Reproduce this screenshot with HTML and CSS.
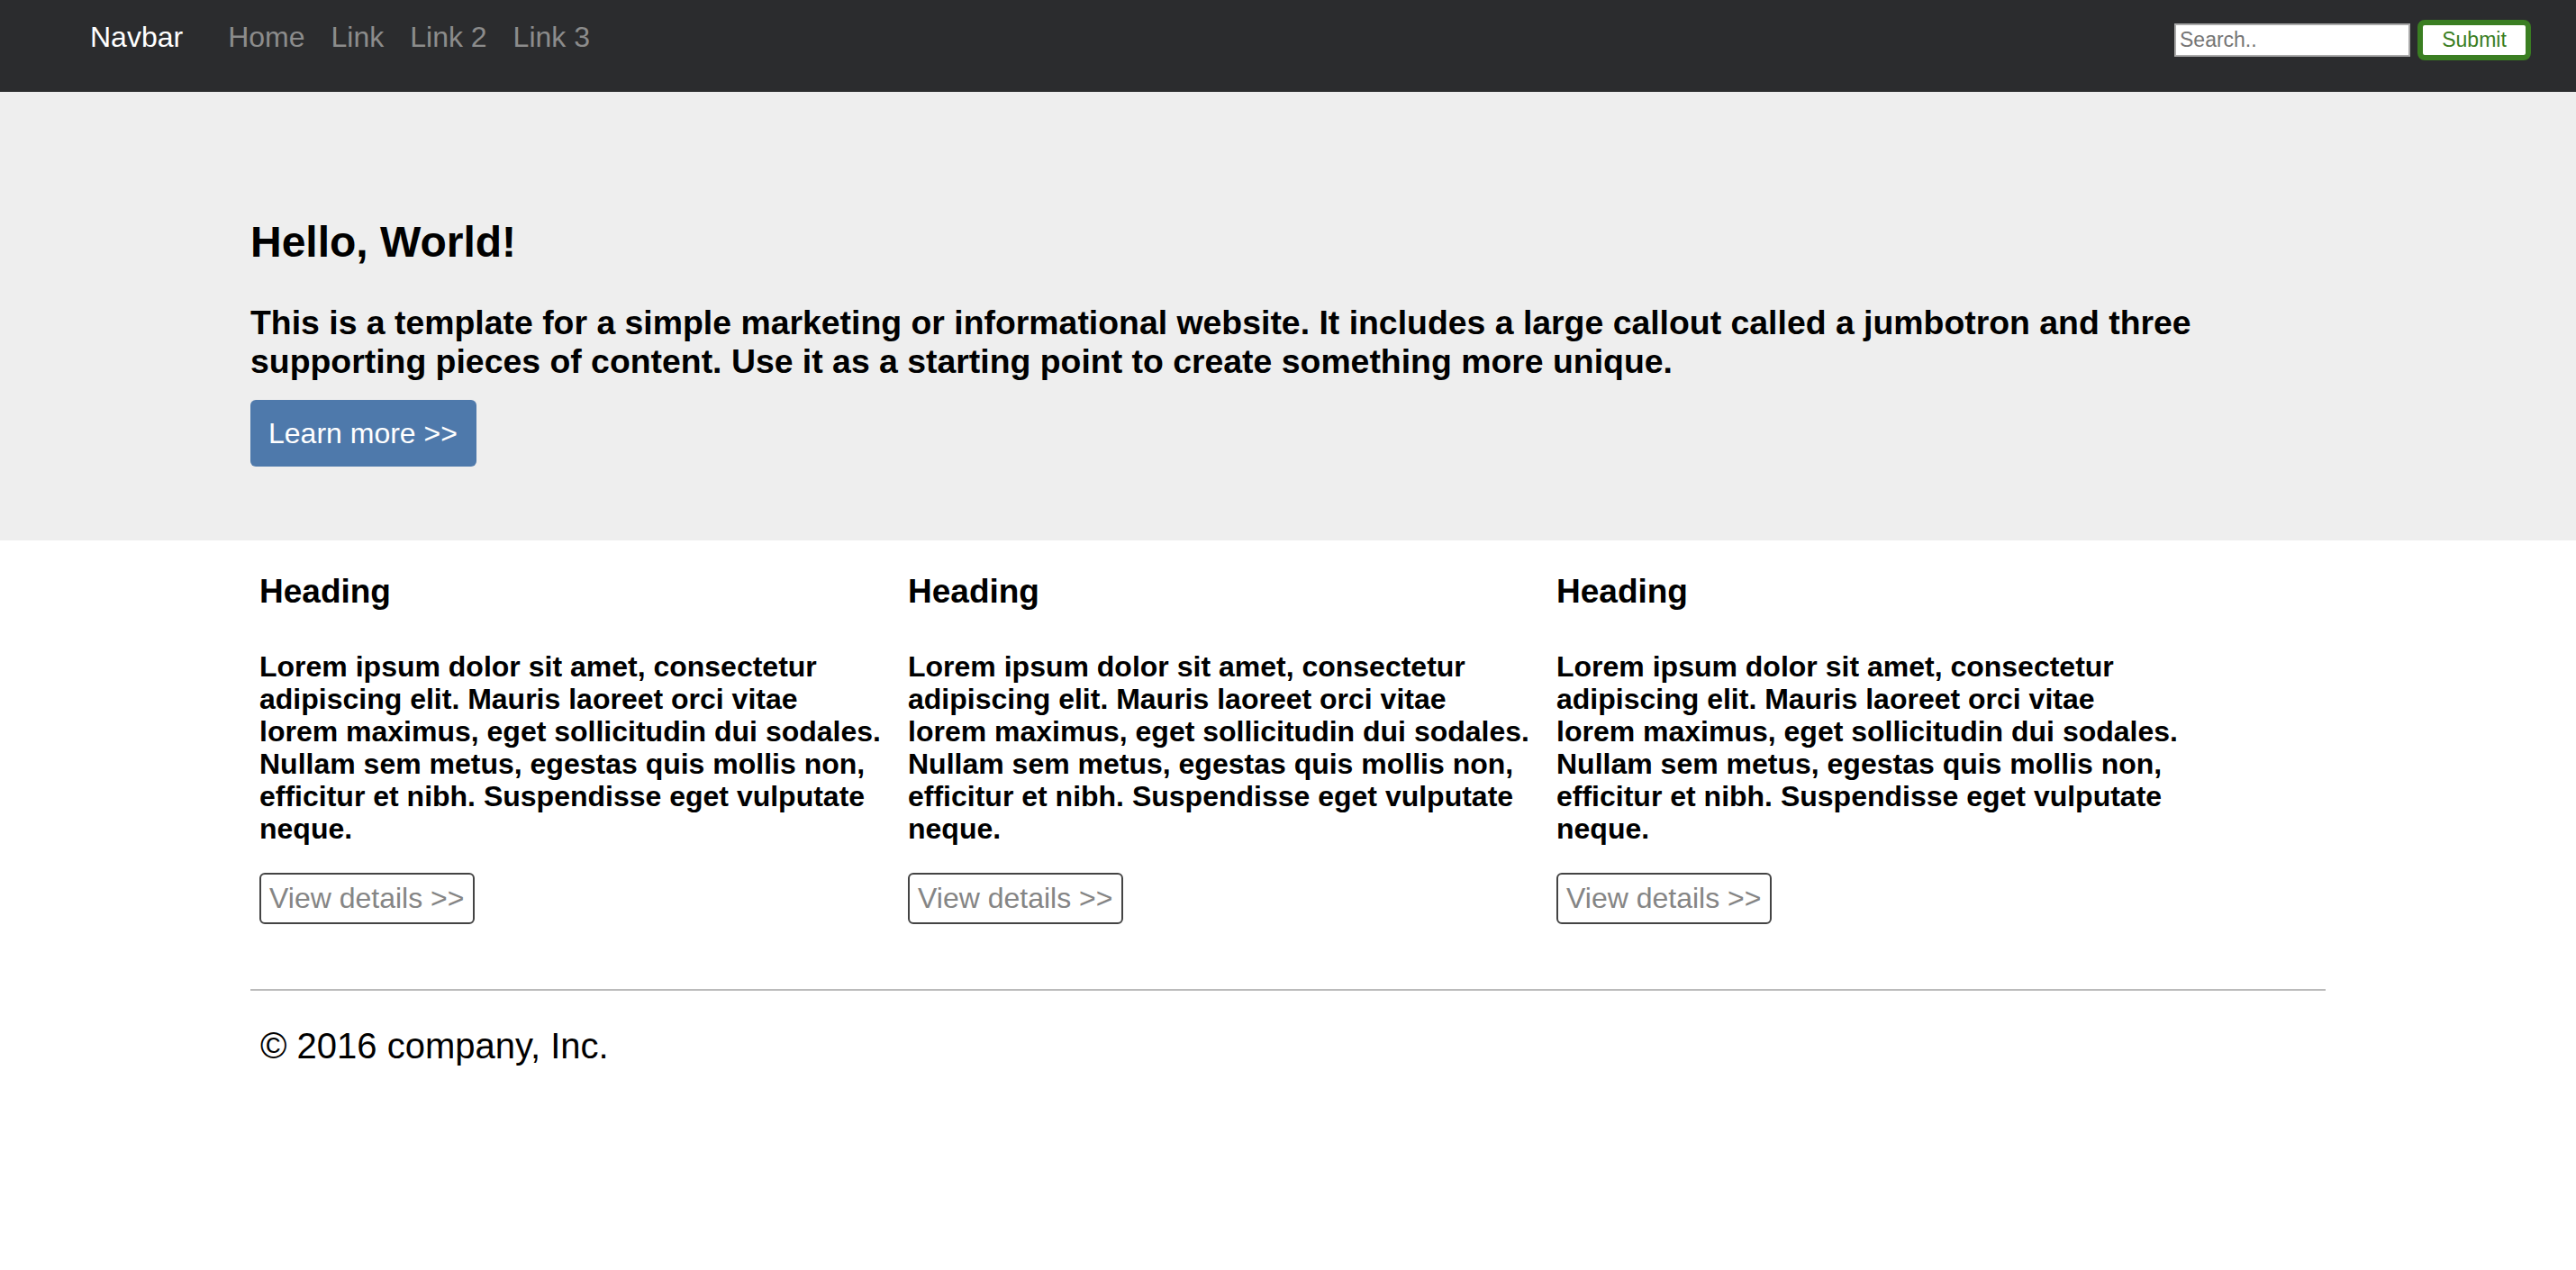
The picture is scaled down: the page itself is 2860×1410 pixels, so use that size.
FILE: index.html
```html
<!DOCTYPE html>
<html lang="en">
<head>
<meta charset="utf-8">
<title>Jumbotron template</title>
<link rel="stylesheet" href="styles.css">
</head>
<body>
<nav class="navbar">
  <a class="brand" href="#">Navbar</a>
  <ul class="nav-links">
    <li><a href="#">Home</a></li>
    <li><a href="#">Link</a></li>
    <li><a href="#">Link 2</a></li>
    <li><a href="#">Link 3</a></li>
  </ul>
  <form class="search-form">
    <input class="search-input" type="text" placeholder="Search..">
    <button class="submit-btn" type="button">Submit</button>
  </form>
</nav>

<section class="jumbotron">
  <div class="container">
    <h1 class="jumbo-title">Hello, World!</h1>
    <p class="jumbo-lead">This is a template for a simple marketing or informational website. It includes a large callout called a jumbotron and three supporting pieces of content. Use it as a starting point to create something more unique.</p>
    <a class="btn-primary" href="#">Learn more &gt;&gt;</a>
  </div>
</section>

<main class="container">
  <div class="row">
    <div class="col">
      <h2 class="col-title">Heading</h2>
      <p class="col-text">Lorem ipsum dolor sit amet, consectetur adipiscing elit. Mauris laoreet orci vitae lorem maximus, eget sollicitudin dui sodales. Nullam sem metus, egestas quis mollis non, efficitur et nibh. Suspendisse eget vulputate neque.</p>
      <a class="btn-outline" href="#">View details &gt;&gt;</a>
    </div>
    <div class="col">
      <h2 class="col-title">Heading</h2>
      <p class="col-text">Lorem ipsum dolor sit amet, consectetur adipiscing elit. Mauris laoreet orci vitae lorem maximus, eget sollicitudin dui sodales. Nullam sem metus, egestas quis mollis non, efficitur et nibh. Suspendisse eget vulputate neque.</p>
      <a class="btn-outline" href="#">View details &gt;&gt;</a>
    </div>
    <div class="col">
      <h2 class="col-title">Heading</h2>
      <p class="col-text">Lorem ipsum dolor sit amet, consectetur adipiscing elit. Mauris laoreet orci vitae lorem maximus, eget sollicitudin dui sodales. Nullam sem metus, egestas quis mollis non, efficitur et nibh. Suspendisse eget vulputate neque.</p>
      <a class="btn-outline" href="#">View details &gt;&gt;</a>
    </div>
  </div>
  <hr class="divider">
  <footer class="footer">&copy; 2016 company, Inc.</footer>
</main>
</body>
</html>
```

FILE: styles.css
```css
* { box-sizing: border-box; }

body {
  margin: 0;
  font-family: "Liberation Sans", Arial, Helvetica, sans-serif;
  color: #000;
  background: #fff;
}

a { text-decoration: none; }

/* Navbar */
.navbar {
  height: 102px;
  background: #2b2c2e;
  display: flex;
  align-items: flex-start;
  padding: 0 50px 0 100px;
}

.brand {
  color: #fff;
  font-size: 32px;
  line-height: 36px;
  margin-top: 23px;
}

.nav-links {
  list-style: none;
  margin: 23px 0 0 50px;
  padding: 0;
  display: flex;
  gap: 29px;
}

.nav-links a {
  color: #8c8c8c;
  font-size: 32px;
  line-height: 36px;
}

.search-form {
  margin-left: auto;
  margin-top: 22px;
  display: flex;
  align-items: center;
  gap: 8px;
}

.search-input {
  width: 262px;
  height: 37px;
  border: 2px solid #a9a9a9;
  background: #fff;
  padding: 0 4px;
  font-family: "Liberation Sans", Arial, sans-serif;
  font-size: 23px;
  color: #333;
  outline: none;
}

.search-input::placeholder { color: #757575; }

.submit-btn {
  width: 126px;
  height: 45px;
  border: 6px solid #3a7e22;
  border-radius: 8px;
  background: #fff;
  color: #3a7e22;
  font-family: "Liberation Sans", Arial, sans-serif;
  font-size: 23px;
  padding: 0;
}

/* Jumbotron */
.jumbotron {
  background: #eeeeee;
  padding: 139px 0 82px;
}

.container {
  width: 2304px;
  margin: 0 auto;
}

.jumbo-title {
  margin: 0;
  font-size: 48px;
  line-height: 56px;
  font-weight: bold;
}

.jumbo-lead {
  margin: 40px 0 20px;
  max-width: 2200px;
  font-size: 37.4px;
  line-height: 43.3px;
  font-weight: bold;
}

.btn-primary {
  display: inline-block;
  height: 74px;
  line-height: 74px;
  padding: 0 21px 0 20px;
  background: #4e79ab;
  color: #fff;
  font-size: 32px;
  border-radius: 6px;
}

/* Columns */
.row {
  display: grid;
  grid-template-columns: repeat(3, 720px);
  padding-top: 36px;
}

.col {
  padding: 0 18px 0 10px;
}

.col-title {
  margin: 0;
  font-size: 37px;
  line-height: 42px;
  font-weight: bold;
}

.col-text {
  margin: 44px 0 31px;
  font-size: 32px;
  line-height: 36px;
  font-weight: bold;
}

.btn-outline {
  display: inline-block;
  height: 57px;
  line-height: 53px;
  padding: 0 10px 0 9px;
  border: 2px solid #444;
  border-radius: 6px;
  color: #858585;
  font-size: 32px;
}

.divider {
  margin: 72px 0 0;
  border: 0;
  height: 2px;
  background: #bbbbbb;
}

.footer {
  padding: 38px 11px 0;
  font-size: 40px;
  line-height: 46px;
}
```
